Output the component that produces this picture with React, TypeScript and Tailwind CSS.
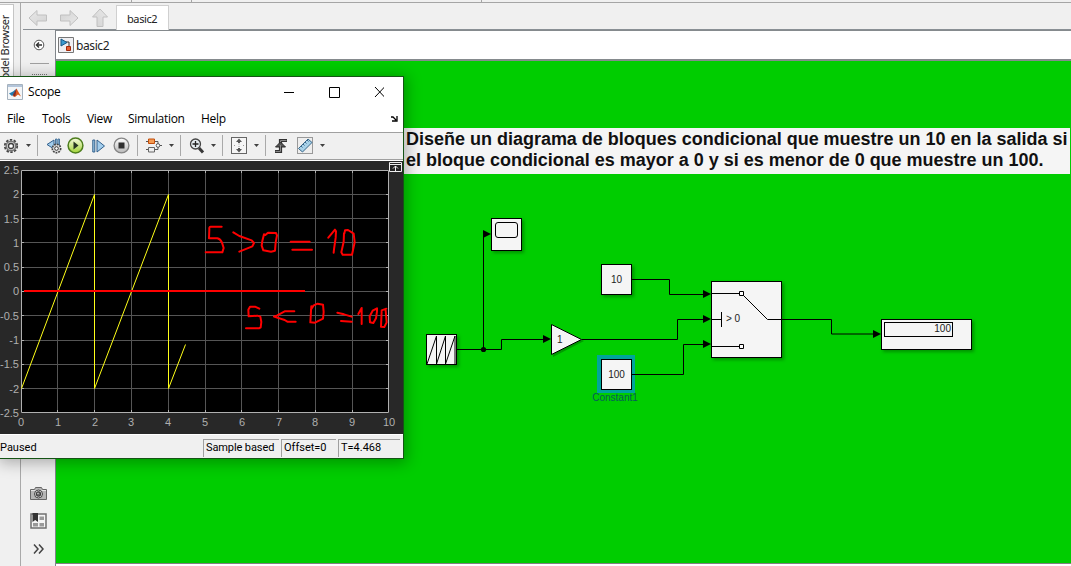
import type { ReactNode } from "react";

const gridX = [57.5, 94.5, 131.5, 168.5, 205.5, 241.5, 278.5, 315.5, 352.5];
const gridY = [194.5, 218.5, 242.5, 267.5, 291.5, 315.5, 340.5, 364.5, 388.5];
const xLabels = [21, 58, 95, 131, 168, 205, 242, 279, 315, 352, 389];
const yLabels: [string, number][] = [
  ["2.5", 170], ["2", 194], ["1.5", 219], ["1", 243], ["0.5", 267], ["0", 291],
  ["-0.5", 316], ["-1", 340], ["-1.5", 364], ["-2", 389], ["-2.5", 413],
];

function NavArrow({ className = "" }: { className?: string }) {
  return (
    <svg width="20" height="18" viewBox="0 0 20 18" className={className}>
      <defs><linearGradient id="nav" x2="1" y2="1"><stop stopColor="#e9e9e9" /><stop offset="1" stopColor="#d2d2d2" /></linearGradient></defs>
      <path d="M1 9 9 1.500V6h9.500v6H9v4.500z" fill="url(#nav)" stroke="#c0c0c0" />
    </svg>
  );
}

function Caret() {
  return <svg width="5" height="3" viewBox="0 0 5 3" className="shrink-0"><path d="M0 0h5L2.5 3z" fill="#404040" /></svg>;
}

function Sep() {
  return <div className="h-[21px] w-px shrink-0 bg-[#a9a9a9]" />;
}

function Gear() {
  return (
    <svg width="16" height="16" viewBox="0 0 16 16">
      <circle cx="8" cy="8" r="6.2" fill="none" stroke="#444" strokeWidth="1.8" strokeDasharray="2.4 1.5" />
      <circle cx="8" cy="8" r="4.800" fill="#d0d0d0" stroke="#777" strokeWidth="1.500" />
      <circle cx="8" cy="8" r="2.5" fill="#fff" stroke="#404040" strokeWidth="1.3" />
    </svg>
  );
}

function StepBack() {
  return (
    <svg width="16" height="16" viewBox="0 0 16 16">
      <path d="M8 2v9L1 6.5z" fill="#a3cdec" stroke="#315f8b" />
      <path d="M9.5 1h1.5v6H9.5zM12 1h1.5v6H12z" fill="#a3cdec" stroke="#315f8b" strokeWidth=".8" />
      <circle cx="10.5" cy="10.5" r="4.2" fill="#ddd" stroke="#444" strokeWidth="1.6" strokeDasharray="1.8 1" />
      <circle cx="10.5" cy="10.5" r="1.8" fill="#fff" stroke="#333" />
    </svg>
  );
}

function Play() {
  return (
    <svg width="17" height="17" viewBox="0 0 17 17">
      <defs><linearGradient id="play" x2="0" y2="1"><stop stopColor="#f7fae2" /><stop offset="1" stopColor="#a2d436" /></linearGradient></defs>
      <circle cx="8.5" cy="8.5" r="7.4" fill="url(#play)" stroke="#4d7d1d" strokeWidth="1.5" />
      <path d="M6.5 4.5v8l5-4z" fill="#263522" />
    </svg>
  );
}

function StepForward() {
  return (
    <svg width="14" height="14" viewBox="0 0 14 14">
      <path d="M.8 1h2v12h-2zM5 1v12l7.500-6z" fill="#a3cdec" stroke="#315f8b" />
    </svg>
  );
}

function Stop() {
  return (
    <svg width="17" height="17" viewBox="0 0 17 17">
      <defs><linearGradient id="stop" x2="0" y2="1"><stop stopColor="#fff" /><stop offset="1" stopColor="#b8b8b8" /></linearGradient></defs>
      <circle cx="8.5" cy="8.5" r="7.4" fill="url(#stop)" stroke="#858585" strokeWidth="1.3" />
      <path d="M5.5 5.5h6v6h-6z" fill="#303030" />
    </svg>
  );
}

function BlocksIcon() {
  return (
    <svg width="16" height="15" viewBox="0 0 16 15">
      <path d="M0 3.5h3M9 3.5h3v3M0 11.5h3M9 11.5h3v-3M13 7.5h3" stroke="#555" fill="none" />
      <path d="M2.5 1h6v4.5h-6z" fill="#f49b52" stroke="#c24e0c" />
      <path d="M2.5 9.5h6V14h-6z" fill="#eee" stroke="#666" />
      <circle cx="12" cy="7.5" r="1.8" fill="#fff" stroke="#555" />
    </svg>
  );
}

function Magnifier() {
  return (
    <svg width="16" height="16" viewBox="0 0 16 16">
      <path d="m10 10 4 4.5" stroke="#383838" strokeWidth="3" />
      <circle cx="6.5" cy="6" r="5" fill="#e6eef2" stroke="#444" strokeWidth="1.3" />
      <path d="M3.5 6h6M6.5 3v6" stroke="#222" strokeWidth="1.3" />
    </svg>
  );
}

function FitIcon() {
  return (
    <svg width="16" height="17" viewBox="0 0 16 17">
      <rect x=".5" y=".5" width="15" height="16" fill="#f5f5f5" stroke="#666" />
      <path d="M8 1.5 11 5H9v1H7V5H5zM8 15.5 11 12H9v-1H7v1H5z" fill="#555" />
      <path d="M7.5 7h1M7.5 9.500h1M3 8.500h1M12 8.500h1" stroke="#999" />
    </svg>
  );
}

function Trigger() {
  return (
    <svg width="14" height="16" viewBox="0 0 14 16">
      <path d="M1 13.500h5.500v-11H13" fill="none" stroke="#333" strokeWidth="3.2" />
      <path d="M1.500 13.500h5v-11h6" fill="none" stroke="#888" />
      <path d="M1.500 9 6.500 4l5 5z" fill="#555" stroke="#292929" />
      <path d="M6.500 7v6" stroke="#888" />
    </svg>
  );
}

function Ruler() {
  return (
    <svg width="16" height="17" viewBox="0 0 16 17">
      <rect x=".5" y=".5" width="15" height="16" fill="#eee" stroke="#999" />
      <path d="m1.500 11.500 9.500-9.500 4 3.500L5.500 15z" fill="#a9d2e9" stroke="#38678a" />
      <path d="m4 9 1.500 1.500M6 7l1.500 1.500M8 5l1.500 1.500M10 3l1.500 1.500" stroke="#38678a" />
    </svg>
  );
}

function MatlabIcon() {
  return (
    <svg width="16" height="16" viewBox="0 0 16 16">
      <path d="M.5.5h15v15H.5z" fill="#f4f6f8" stroke="#a5b1bd" />
      <path d="M1 1h14v2H1z" fill="#b3c5da" />
      <path d="m2 9.500 4-2L9 5l-2 5.500-2 1.500z" fill="#247bad" />
      <path d="m5.500 12 2-3L9.500 4.500 14 12.500l-3-2L8 13z" fill="#dc5a1b" />
      <path d="m9.500 4.500-1 7L7 12.500l-1-2z" fill="#812b28" />
    </svg>
  );
}

function ModelIcon() {
  return (
    <svg width="16" height="16" viewBox="0 0 16 16">
      <path d="M.5.5h15v15H.5z" fill="#f0f0f3" stroke="#777" />
      <path d="M8 5h3v5" fill="none" stroke="#333" />
      <path d="m3 2 6 3.500L3 9z" fill="#3c9cd0" stroke="#175783" />
      <path d="M8.500 9.500h4v4h-4z" fill="#e66032" stroke="#a32808" />
    </svg>
  );
}

function Camera() {
  return (
    <svg width="17" height="13" viewBox="0 0 17 13">
      <path d="M.5 2.500h4l1-2h6l1 2h4v10H.5z" fill="#b5b5b5" stroke="#666" />
      <path d="M1 3.500h15" stroke="#e5e5e5" />
      <circle cx="8.500" cy="7" r="4" fill="#ddd" stroke="#444" />
      <circle cx="8.500" cy="7" r="2.300" fill="#666" stroke="#333" />
      <circle cx="8" cy="6.500" r=".8" fill="#ccc" />
    </svg>
  );
}

function Library() {
  return (
    <svg width="17" height="16" viewBox="0 0 17 16">
      <path d="M1 1h15v14H1z" fill="#f5f5f5" stroke="#707070" strokeWidth="1.500" />
      <path d="M9.500 3.500H14V7H9.500zM3 10h5v3.500H3zM9.500 10H14v3.500H9.500z" fill="#999" />
      <path d="M2.500 0H8v9L5.200 7 2.500 9z" fill="#333" />
    </svg>
  );
}

function Block({ className, children }: { className: string; children?: ReactNode }) {
  return <div className={`absolute border border-black bg-[#f5f5f5] ${className}`}>{children}</div>;
}

function ModelCanvas() {
  return (
    <div className="relative h-[502px] shrink-0 overflow-hidden bg-[#00cd00] font-['Liberation_Sans',sans-serif] text-[10px] text-[#222]">
      <div className="absolute top-[67px] left-[348px] h-[46px] w-[666px] bg-[#f5f5f5] pt-px pl-[2px] text-[18px] leading-[21px] font-bold tracking-[-0.01px] whitespace-nowrap text-[#111]">
        <p>Diseñe un diagrama de bloques condicional que muestre un 10 en la salida si</p>
        <p>el bloque condicional es mayor a 0 y si es menor de 0 que muestre un 100.</p>
      </div>
      <div className="absolute top-[294px] left-[541px] size-[38px] bg-[#00a59b]" />
      <Block className="top-[157px] left-[435px] h-[33px] w-[31px] shadow-[2px_2px_3px_#006b0090]">
        <div className="mx-[3px] mt-[3px] h-[16px] rounded-[3px] border border-black" />
      </Block>
      <Block className="top-[273px] left-[370px] size-[31px] shadow-[2px_2px_3px_#006b0090]" />
      <Block className="top-[203px] left-[545px] flex size-[31px] items-center justify-center pb-px shadow-[2px_2px_3px_#006b0090]">10</Block>
      <Block className="top-[298px] left-[545px] flex size-[31px] items-center justify-center pb-px">100</Block>
      <Block className="top-[220px] left-[655px] h-[77px] w-[71px] shadow-[2px_2px_3px_#006b0090]">
        <span className="block pt-[31px] pl-[14px] leading-3">&gt; 0</span>
      </Block>
      <Block className="top-[258px] left-[825px] h-[31px] w-[91px] shadow-[2px_2px_3px_#006b0090]">
        <div className="mt-[2px] ml-[2px] h-[15px] w-[69px] border border-black pr-px text-right leading-3">100</div>
      </Block>
      <div className="absolute top-[331px] left-[528px] w-[62px] text-center leading-[12px] text-[#065c5c]">Constant1</div>
      <svg className="absolute inset-0 size-full" viewBox="56 61 1015 502">
        <path d="m553 326 31 15-31 16z" fill="#006b00" opacity=".5" />
        <path d="m551.500 324.500 30 15-30 15z" fill="#f5f5f5" stroke="#000" />
        <path
          d="M457 349.500h44.500v-10h43.500M483.500 349v-115.500h4M582 339.500h95.500v-20h27M632 279.500h37.500v15h35M632 374.500h51.500v-30h20M711 293.500h28M711 319.500h10.500M721.500 312v15M711 346.500h28M782 319.500h49.500v14.500h42M767.500 319.500H782M743 295l24.500 24.500"
          fill="none" stroke="#000"
        />
        <path d="m543 335 8 4-8 4zM483 230l8 4-8 4zM703 290l8 4-8 4zM703 315l8 4-8 4zM703 340l8 4-8 4zM873 330l8 4-8 4z" />
        <circle cx="483.500" cy="349.500" r="2.600" />
        <path d="M739.500 291.500h4v4h-4zM739.500 344.500h4v4h-4z" fill="#fff" stroke="#000" />
        <path d="m427 364 9.500-28v28l9-28v28l9.500-28v28" fill="none" stroke="#000" />
      </svg>
      <span className="absolute top-[273px] left-[501px] leading-3">1</span>
    </div>
  );
}

function ScopePlot() {
  return (
    <svg width="403" height="273" viewBox="0 161 403 273" className="block shrink-0 bg-[#282828]">
      <path d="M21 170h368v243H21z" fill="#000" />
      <g stroke="#555">
        {gridX.map((x) => <path key={x} d={`M${x} 170v243`} />)}
        {gridY.map((y) => <path key={y} d={`M21 ${y}h368`} />)}
      </g>
      <g stroke="#b0b0b0">
        {gridX.map((x) => <path key={x} d={`M${x} 170v3M${x} 410v3`} />)}
        {gridY.map((y) => <path key={y} d={`M21 ${y}h3M386 ${y}h3`} />)}
        <path d="M21.500 170.500h367v242h-367z" fill="none" />
      </g>
      <g className="font-['Liberation_Sans',sans-serif] text-[11px]" fill="#afafaf">
        {yLabels.map(([label, y]) => <text key={label} x="19" y={y + 4} textAnchor="end">{label}</text>)}
        {xLabels.map((x, i) => <text key={x} x={x} y="426" textAnchor="middle">{i}</text>)}
      </g>
      <path d="m21.500 388.500 73-194v194l74-194v194l17-44" fill="none" stroke="#ffff18" />
      <path d="M24 291h281" stroke="#f00" strokeWidth="2.200" />
      <g transform="translate(195 180) scale(.33333)" fill="none" stroke="#f00" strokeWidth="6" strokeLinecap="round" strokeLinejoin="round">
        <path d="M80 140H47q-5 0-4 8l-1 27h25q9 2 14 13l5 16-4 13H32M115 157l18 11 37 13 7 8-5 10-39 16M207 163l-5 20-2 14 5 14 23 4 12-3 2-25 4-21-3-7-24-1-8 7M287 185h57M292 209h59M400 173l20-24 3 5-1 19-5 35-1 10M447 160l-1 25-7 32 4 7h28l8-37-3-26-17-11-9 1-2 10" />
        <path d="M193 386l-13-6h-15l-5 9 1 20 26-2 9 3 3 16-2 16-5 3h-39M298 394h-29l-22 12-10 4 32 10 8 5h25M349 379l-1 14-2 34 14 1 24-12 2-20-2-22-16-3-12 5-8 12M427 398l20 5 23 7M438 423l32 2M490 402l10-18v48M546 385l-13 7-9 17 1 18 10 2 8-14 3-21zM574 386l-14 5-2 49 10 1 7-14-3-36" />
      </g>
      <g stroke="#eee" fill="none">
        <path d="M389.500 162.500h12v9h-12z" fill="#222" />
        <path d="M390 164.500h11M395.500 171v-5M393 168.500l2.500-2.500 2.500 2.500" />
      </g>
    </svg>
  );
}

function ScopeWindow() {
  return (
    <section className="absolute top-[76px] left-0 flex h-[383px] w-[404px] flex-col overflow-hidden border-t border-r border-b border-[#155415] bg-white font-['Open_Sans','Noto_Sans',sans-serif] text-[12px] text-black shadow-[1px_2px_14px_2px_#00000048]">
      <header className="flex h-[29px] shrink-0 items-center pl-[7px]">
        <MatlabIcon />
        <span className="ml-[5px] tracking-[-0.2px]">Scope</span>
        <svg width="100" height="12" viewBox="0 0 100 12" className="mr-[19px] ml-auto" fill="none" stroke="#000">
          <path d="M0 6.500h10M45.500 1.500h10v10h-10zM91 1l9.500 10M100.500 1l-9.500 10" />
        </svg>
      </header>
      <nav className="flex h-[26px] shrink-0 items-center pl-[7px] tracking-[-0.3px]">
        <span className="w-[35px]">File</span>
        <span className="w-[45px]">Tools</span>
        <span className="w-[41px]">View</span>
        <span className="w-[73px]">Simulation</span>
        <span>Help</span>
        <svg width="7" height="6" viewBox="0 0 7 6" className="mr-[5px] ml-auto"><path d="M0 1h2l3 3M6 0v5H1" fill="none" stroke="#000" strokeWidth="1.300" /></svg>
      </nav>
      <div className="flex h-[28px] shrink-0 items-center border-y border-[#a0a0a0] bg-[#f0f0f0] pb-px pl-[3px]">
        <Gear /><div className="w-[7px]" /><Caret /><div className="w-[6px]" /><Sep />
        <div className="w-[8px]" /><StepBack /><div className="w-[5px]" /><Play /><div className="w-[8px]" /><StepForward />
        <div className="w-[7px]" /><Stop /><div className="w-[7px]" /><Sep /><div className="w-[8px]" /><BlocksIcon />
        <div className="w-[7px]" /><Caret /><div className="w-[6px]" /><Sep /><div className="w-[8px]" /><Magnifier />
        <div className="w-[6px]" /><Caret /><div className="w-[6px]" /><Sep /><div className="w-[8px]" /><FitIcon />
        <div className="w-[7px]" /><Caret /><div className="w-[6px]" /><Sep /><div className="w-[8px]" /><Trigger />
        <div className="w-[9px]" /><Ruler /><div className="w-[7px]" /><Caret />
      </div>
      <div className="h-px shrink-0 bg-white" />
      <ScopePlot />
      <footer className="flex grow items-center gap-[2px] border-t border-white bg-[#f0f0f0] pt-[2px] pr-[3px] font-['Roboto',sans-serif] text-[11px]">
        <span className="grow pt-px">Paused</span>
        <span className="flex h-[18px] w-[76px] items-center border-t border-l border-[#a0a0a0] pt-px pl-[2px] tracking-[-0.1px] whitespace-nowrap">Sample based</span>
        <span className="flex h-[18px] w-[55px] items-center border-t border-l border-[#a0a0a0] pt-px pl-[2px]">Offset=0</span>
        <span className="flex h-[18px] w-[62px] items-center border-t border-l border-[#a0a0a0] pt-px pl-[2px]">T=4.468</span>
      </footer>
    </section>
  );
}

export default function App() {
  return (
    <main className="relative flex h-[566px] w-[1071px] flex-col overflow-hidden bg-[#f0f0f0] font-['Noto_Sans',sans-serif] text-[11px] text-[#222]">
      <div className="flex h-[3px] shrink-0 border-b border-[#a5a5a5]">
        <div className="w-[132px] border-r border-[#a5a5a5]" />
        <div className="w-[60px] border-r border-[#a5a5a5]" />
        <div className="w-[290px] border-r border-[#a5a5a5]" />
      </div>
      <div className="flex min-h-0 grow">
        <aside className="w-[21px] shrink-0 border-r border-[#a9a9a9]">
          <div className="mt-px flex h-[90px] w-[14px] items-start border-t border-r border-[#c5c5c5] bg-white pt-[10px]">
            <span className="-ml-px rotate-180 text-[11px] leading-[12px] tracking-[-0.3px] whitespace-nowrap [writing-mode:vertical-rl]">Model Browser</span>
          </div>
        </aside>
        <div className="flex min-w-0 grow flex-col pl-[2px]">
          <div className="flex h-[27px] shrink-0 border-b border-[#8a9095] pl-[5px]">
            <div className="flex items-center gap-[11px] pt-[4px]"><NavArrow /><NavArrow className="rotate-180" /><NavArrow className="rotate-90" /></div>
            <div className="mt-[2px] -mb-px ml-[6px] flex w-[53px] items-center border border-b-0 border-[#d0d0d0] bg-white pt-[3px] pl-[10px] tracking-[-0.4px]">basic2</div>
          </div>
          <div className="flex min-h-0 grow">
            <aside className="flex w-[32px] shrink-0 flex-col items-center">
              <svg width="12" height="12" viewBox="0 0 12 12" className="mt-[9px]"><circle cx="6" cy="6" r="4.800" fill="#fff" stroke="#555" /><path d="M9 6H4M6 3.500 3.500 6 6 8.500" stroke="#333" strokeWidth="1.500" fill="none" /></svg>
              <div className="mt-[12px] h-px w-[19px] bg-[#a0a0a0]" />
              <div className="mt-[10px] h-[2px] w-[15px] border-t border-dotted border-[#777]" />
              <div className="mt-[411px] pr-px"><Camera /></div>
              <div className="mt-[13px] pr-px"><Library /></div>
              <svg width="12" height="10" viewBox="0 0 12 10" className="mt-[15px]"><path d="m1 .5 4 4.500-4 4.500M6 .5l4 4.500L6 9.500" stroke="#444" strokeWidth="1.500" fill="none" /></svg>
            </aside>
            <div className="flex min-w-0 grow flex-col border-l border-[#80858a] bg-white">
              <div className="flex h-[31px] shrink-0 items-center border-t border-b-2 border-[#858a8d] bg-white pl-[2px]">
                <ModelIcon /><span className="ml-[2px] pt-[2px] text-[12px] tracking-[-0.4px]">basic2</span>
              </div>
              <ModelCanvas />
              <div className="h-px shrink-0 bg-[#808080]" />
            </div>
          </div>
        </div>
      </div>
      <ScopeWindow />
    </main>
  );
}
